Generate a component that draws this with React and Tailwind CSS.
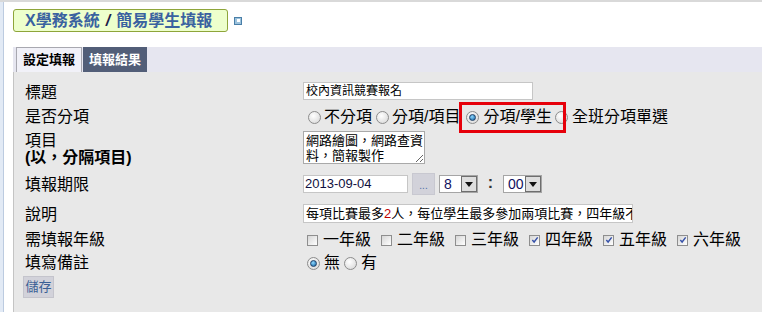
import React from "react";

const Radio = ({ checked = false, className = "" }) => (
  <span
    className={
      "inline-flex h-[13px] w-[13px] shrink-0 items-center justify-center rounded-full border border-[#8c8c8c] bg-[radial-gradient(circle_at_40%_35%,#ffffff,#d4d4d4)] " +
      className
    }
  >
    {checked && (
      <span className="h-[7px] w-[7px] rounded-full border border-[#1f3f66] bg-[radial-gradient(circle_at_40%_35%,#8fd8ff,#0b5d9e)]" />
    )}
  </span>
);

const Checkbox = ({ checked = false }) => (
  <span className="mr-[5px] inline-flex h-[11px] w-[11px] shrink-0 items-center justify-center border border-[#8e8e8e] bg-linear-to-br from-[#d6d6d6] to-white">
    {checked && (
      <svg width="8" height="8" viewBox="0 0 9 9">
        <path d="M1.5 4.5 L3.5 6.8 L7.5 1.5" fill="none" stroke="#3550a8" strokeWidth="1.6" />
      </svg>
    )}
  </span>
);

const Select = ({ value }) => (
  <div className="flex h-[18px] w-[39px] items-center border border-[#a5a5a5] bg-white">
    <span className="flex-1 pl-[4px] text-[14px] leading-[16px] text-[#101060]">{value}</span>
    <span className="flex h-[16px] w-[16px] items-center justify-center border border-[#6e6e6e] bg-[#dedede]">
      <svg width="8" height="5" viewBox="0 0 8 5">
        <path d="M0 0 H8 L4 5 Z" fill="#111" />
      </svg>
    </span>
  </div>
);

const grades = [
  ["一年級", false],
  ["二年級", false],
  ["三年級", false],
  ["四年級", true],
  ["五年級", true],
  ["六年級", true],
];

export default function App() {
  return (
    <div className="flex h-[312px] w-full overflow-hidden border-t-2 border-[#d9d9d9] bg-white font-['Liberation_Sans','Noto_Sans_CJK_TC',sans-serif] text-black">
      <div className="w-[4px] shrink-0 border-r border-[#bccbe0] bg-[#e2eaf5]" />
      <div className="flex min-w-0 flex-1 flex-col pl-[9px] pt-[7px]">
        {/* title */}
        <div className="flex items-center">
          <div className="flex h-[23px] w-[215px] items-center rounded-[3px] border border-[#8ea53a] bg-[#edffcc] pl-[11px] text-[16px] font-bold leading-[18px] text-[#3a62a0]">
            X學務系統 <span className="mx-[6px] italic text-[#1c1c48]">/</span> 簡易學生填報
          </div>
          <span className="ml-[6px] flex h-[8px] w-[8px] items-center justify-center border border-[#4a7fa8] bg-[#9cc2dc]">
            <span className="h-[3px] w-[3px] bg-white" />
          </span>
        </div>

        {/* tabs */}
        <div className="mt-[15px] flex h-[25px] bg-[#e6e6f0] pl-[3px]">
          <div className="flex w-[66px] items-center justify-center border border-b-0 border-[#a8a8b0] bg-[#f1f1f8] text-[13px] font-bold">
            設定填報
          </div>
          <div className="ml-[1px] flex w-[64px] items-center justify-center bg-[#525e78] text-[13px] font-bold text-white">
            填報結果
          </div>
        </div>

        {/* panel */}
        <div className="flex-1 border-l border-[#c4c4c4] bg-[#e8e8e8] pl-[11px] pt-[6px] text-[16px]">
          <div className="flex h-[26px] items-start">
            <div className="mt-[6px] w-[278px] leading-[18px]">標題</div>
            <div className="mt-[4px] flex h-[18px] w-[230px] items-center overflow-hidden whitespace-nowrap border border-[#c6c6c6] bg-white pl-[2px] text-[12px]">
              校內資訊競賽報名
            </div>
          </div>

          <div className="flex h-[27px] items-start">
            <div className="mt-[4px] w-[278px] leading-[18px]">是否分項</div>
            <div className="relative mt-[4px] flex h-[18px] items-center whitespace-nowrap leading-[18px]">
              <Radio className="ml-[5px] mr-[3px]" />
              <span>不分項</span>
              <Radio className="ml-[4px] mr-[3px]" />
              <span>分項/項目</span>
              <Radio checked className="ml-[6px] mr-[4px]" />
              <span>分項/學生</span>
              <Radio className="ml-[3px] mr-[4px]" />
              <span>全班分項單選</span>
              <div className="absolute left-[156px] top-[-6px] h-[31px] w-[107px] border-[3px] border-[#e6000a]" />
            </div>
          </div>

          <div className="flex h-[37px] items-start">
            <div className="mt-[1px] w-[278px] leading-[17px]">
              <div>項目</div>
              <div className="font-bold">(以，分隔項目)</div>
            </div>
            <textarea
              readOnly
              defaultValue="網路繪圖，網路查資料，簡報製作"
              className="h-[33px] w-[122px] resize overflow-hidden border border-[#a9a9a9] bg-white py-[1px] pl-[2px] pr-0 text-[13px] leading-[15px] outline-none"
            />
          </div>

          <div className="flex h-[32px] items-start">
            <div className="mt-[8px] w-[278px] leading-[18px]">填報期限</div>
            <div className="flex items-start">
              <div className="mt-[7px] flex h-[18px] w-[105px] items-center border border-[#c6c6c6] bg-white pl-[1px] text-[13px] text-[#101040]">
                2013-09-04
              </div>
              <div className="ml-[4px] mt-[5px] flex h-[22px] w-[23px] items-end justify-center border border-[#c8c8d0] bg-[#d2d2da] pb-[3px] text-[10px] leading-[10px] text-[#5070a8]">
                ...
              </div>
              <div className="ml-[4px] mt-[7px]">
                <Select value="8" />
              </div>
              <div className="mt-[6px] flex w-[25px] justify-center text-[16px] font-bold leading-[18px] text-[#333]">:</div>
              <div className="mt-[7px]">
                <Select value="00" />
              </div>
            </div>
          </div>

          <div className="flex h-[26px] items-start">
            <div className="mt-[6px] w-[278px] leading-[18px]">說明</div>
            <div className="mt-[4px] flex h-[19px] w-[330px] items-center overflow-hidden whitespace-nowrap border border-[#c6c6c6] bg-white pl-[2px] text-[13px]">
              每項比賽最多<span className="text-[#c00000]">2</span>人，每位學生最多參加兩項比賽，四年級不需報
            </div>
          </div>

          <div className="flex h-[25px] items-start">
            <div className="mt-[5px] w-[278px] leading-[18px]">需填報年級</div>
            <div className="mt-[5px] flex h-[18px] items-center whitespace-nowrap pl-[4px] leading-[18px]">
              {grades.map(([g, c]) => (
                <span key={g} className="mr-[10px] flex items-center">
                  <Checkbox checked={c} />
                  <span>{g}</span>
                </span>
              ))}
            </div>
          </div>

          <div className="flex h-[24px] items-start">
            <div className="mt-[3px] w-[278px] leading-[18px]">填寫備註</div>
            <div className="mt-[3px] flex h-[18px] items-center whitespace-nowrap leading-[18px]">
              <Radio checked className="ml-[4px] mr-[4px]" />
              <span>無</span>
              <Radio className="ml-[4px] mr-[4px]" />
              <span>有</span>
            </div>
          </div>

          <div className="mt-[1px] -ml-[2px] flex h-[22px] w-[31px] items-center justify-center border border-[#c4c4cc] bg-[#d2d2da] text-[13px] text-[#3a5f95]">
            儲存
          </div>
        </div>
      </div>
    </div>
  );
}
